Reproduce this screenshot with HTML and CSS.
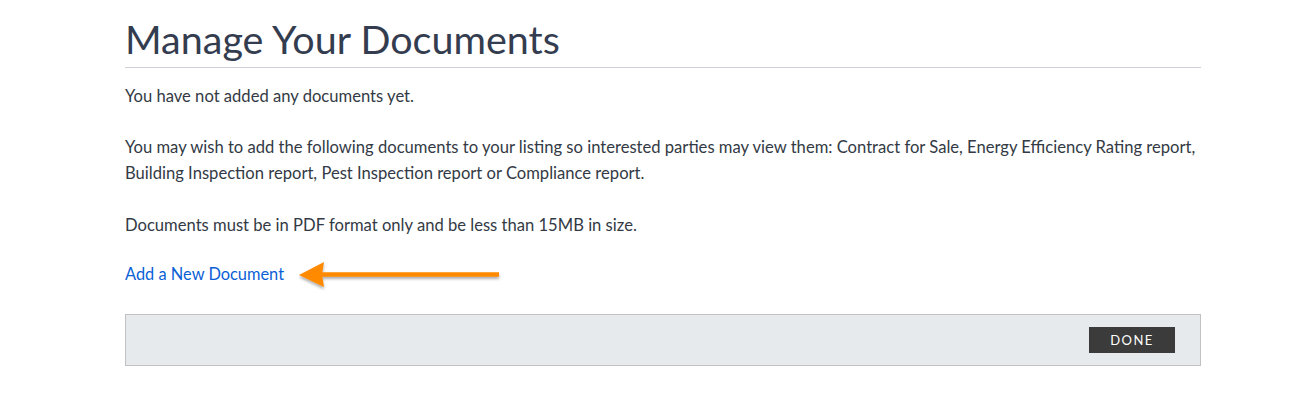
FILE: index.html
```html
<!DOCTYPE html>
<html>
<head>
<meta charset="utf-8">
<link rel="stylesheet" href="styles.css">
</head>
<body>
<main class="page">
  <h1 class="title">Manage Your Documents</h1>
  <p class="text first">You have not added any documents yet.</p>
  <p class="text second">You may wish to add the following documents to your listing so interested parties may view them: Contract for Sale, Energy Efficiency Rating report, Building Inspection report, Pest Inspection report or Compliance report.</p>
  <p class="text third">Documents must be in PDF format only and be less than 15MB in size.</p>
  <p class="text link-row">
    <a class="add-link" href="#">Add a New Document</a>
    <svg class="arrow" width="210" height="40" viewBox="0 0 210 40" xmlns="http://www.w3.org/2000/svg">
      <defs>
        <filter id="sh" x="-10%" y="-30%" width="120%" height="180%">
          <feDropShadow dx="0" dy="2" stdDeviation="1.5" flood-color="#000" flood-opacity="0.35"/>
        </filter>
      </defs>
      <g filter="url(#sh)">
        <line x1="22" y1="18.5" x2="200" y2="18.5" stroke="#ff8a00" stroke-width="4.5"/>
        <polygon points="0,19 25,6 23,18.5 25,31" fill="#ff8a00"/>
      </g>
    </svg>
  </p>
  <div class="actions">
    <button class="done">DONE</button>
  </div>
</main>
</body>
</html>
```

FILE: styles.css
```css
html, body {
  margin: 0;
  padding: 0;
  background: #ffffff;
}
.page {
  width: 1076px;
  margin-left: 125px;
  font-family: "Lato", "Noto Sans", sans-serif;
  color: #333a45;
}
.title {
  margin: 0;
  padding-top: 18px;
  padding-bottom: 7px;
  font-family: "Lato", sans-serif;
  font-weight: 400;
  font-size: 39.5px;
  line-height: 42px;
  color: #343d4f;
  border-bottom: 1px solid #cfd1d6;
}
.text {
  margin: 23px 0 0;
  font-size: 16.6px;
  line-height: 26px;
}
.text.first {
  margin-top: 15px;
}
.text.second {
  margin-top: 25px;
}
.text.third {
  margin-top: 26px;
}
.link-row {
  position: relative;
  font-size: 16.4px;
}
.add-link {
  color: #0a5fd6;
  text-decoration: none;
}
.arrow {
  position: absolute;
  left: 174px;
  top: -5px;
}
.actions {
  margin-top: 27px;
  height: 52px;
  box-sizing: border-box;
  background: #e6eaed;
  border: 1px solid #c2c2c2;
  display: flex;
  align-items: center;
  justify-content: flex-end;
  padding-right: 25px;
}
.done {
  width: 86px;
  height: 26px;
  border: 0;
  background: #3b3b3b;
  color: #ffffff;
  font-family: "Lato", sans-serif;
  font-size: 13px;
  letter-spacing: 1.5px;
  padding: 0;
  cursor: pointer;
}
```
